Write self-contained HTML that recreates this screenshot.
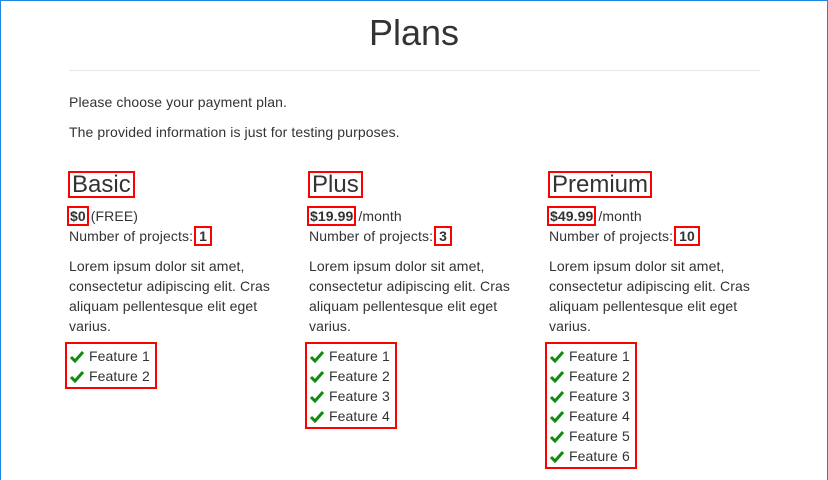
<!DOCTYPE html>
<html><head><style>
html,body{margin:0;padding:0;}
body{width:828px;height:480px;box-sizing:border-box;border:1px solid #1e88e5;border-bottom:none;font-family:"Liberation Sans",sans-serif;color:#333;font-size:14px;letter-spacing:0.1px;position:relative;overflow:hidden;background:#fff;}
h1{position:absolute;left:-1px;width:828px;top:12px;margin:0;text-align:center;font-weight:normal;font-size:36px;line-height:40px;letter-spacing:0;}
.hr{position:absolute;left:68px;width:691px;top:69px;border-top:1px solid #e8e8e8;}
p{position:absolute;left:68px;margin:0;line-height:20px;}
.col{position:absolute;top:170px;width:212px;line-height:20px;}
.h{display:inline-block;border:2px solid red;font-size:24px;line-height:23px;padding:0 2px;margin-left:-1px;letter-spacing:0;}
.pr{margin-top:8px;}
.b{font-weight:bold;outline:2px solid red;padding:0 1px;}
.n{font-weight:bold;outline:2px solid red;padding:0 3px;margin-left:3px;}
.d{margin-top:10px;}
.f{display:inline-block;border:2px solid red;padding:2px 5px 1px 3px;margin:6px 0 0 -4px;}
.f div{height:20px;}
svg{vertical-align:-2px;margin-right:5px;}
</style></head><body>
<h1>Plans</h1>
<div class="hr"></div>
<p style="top:91px">Please choose your payment plan.</p>
<p style="top:121px">The provided information is just for testing purposes.</p>

<div class="col" style="left:68px">
<div class="h">Basic</div>
<div class="pr"><span class="b">$0</span> (FREE)</div>
<div>Number of projects:<span class="n">1</span></div>
<div class="d">Lorem ipsum dolor sit amet, consectetur adipiscing elit. Cras aliquam pellentesque elit eget varius.</div>
<div class="f">
<div><svg width="14" height="13" viewBox="0 0 14 13"><path d="M1 7 L5 11 L13 2" stroke="#118a11" stroke-width="3" fill="none"/></svg>Feature 1</div>
<div><svg width="14" height="13" viewBox="0 0 14 13"><path d="M1 7 L5 11 L13 2" stroke="#118a11" stroke-width="3" fill="none"/></svg>Feature 2</div>
</div>
</div>

<div class="col" style="left:308px">
<div class="h">Plus</div>
<div class="pr"><span class="b">$19.99</span> /month</div>
<div>Number of projects:<span class="n">3</span></div>
<div class="d">Lorem ipsum dolor sit amet, consectetur adipiscing elit. Cras aliquam pellentesque elit eget varius.</div>
<div class="f">
<div><svg width="14" height="13" viewBox="0 0 14 13"><path d="M1 7 L5 11 L13 2" stroke="#118a11" stroke-width="3" fill="none"/></svg>Feature 1</div>
<div><svg width="14" height="13" viewBox="0 0 14 13"><path d="M1 7 L5 11 L13 2" stroke="#118a11" stroke-width="3" fill="none"/></svg>Feature 2</div>
<div><svg width="14" height="13" viewBox="0 0 14 13"><path d="M1 7 L5 11 L13 2" stroke="#118a11" stroke-width="3" fill="none"/></svg>Feature 3</div>
<div><svg width="14" height="13" viewBox="0 0 14 13"><path d="M1 7 L5 11 L13 2" stroke="#118a11" stroke-width="3" fill="none"/></svg>Feature 4</div>
</div>
</div>

<div class="col" style="left:548px">
<div class="h">Premium</div>
<div class="pr"><span class="b">$49.99</span> /month</div>
<div>Number of projects:<span class="n">10</span></div>
<div class="d">Lorem ipsum dolor sit amet, consectetur adipiscing elit. Cras aliquam pellentesque elit eget varius.</div>
<div class="f">
<div><svg width="14" height="13" viewBox="0 0 14 13"><path d="M1 7 L5 11 L13 2" stroke="#118a11" stroke-width="3" fill="none"/></svg>Feature 1</div>
<div><svg width="14" height="13" viewBox="0 0 14 13"><path d="M1 7 L5 11 L13 2" stroke="#118a11" stroke-width="3" fill="none"/></svg>Feature 2</div>
<div><svg width="14" height="13" viewBox="0 0 14 13"><path d="M1 7 L5 11 L13 2" stroke="#118a11" stroke-width="3" fill="none"/></svg>Feature 3</div>
<div><svg width="14" height="13" viewBox="0 0 14 13"><path d="M1 7 L5 11 L13 2" stroke="#118a11" stroke-width="3" fill="none"/></svg>Feature 4</div>
<div><svg width="14" height="13" viewBox="0 0 14 13"><path d="M1 7 L5 11 L13 2" stroke="#118a11" stroke-width="3" fill="none"/></svg>Feature 5</div>
<div><svg width="14" height="13" viewBox="0 0 14 13"><path d="M1 7 L5 11 L13 2" stroke="#118a11" stroke-width="3" fill="none"/></svg>Feature 6</div>
</div>
</div>
</body></html>
